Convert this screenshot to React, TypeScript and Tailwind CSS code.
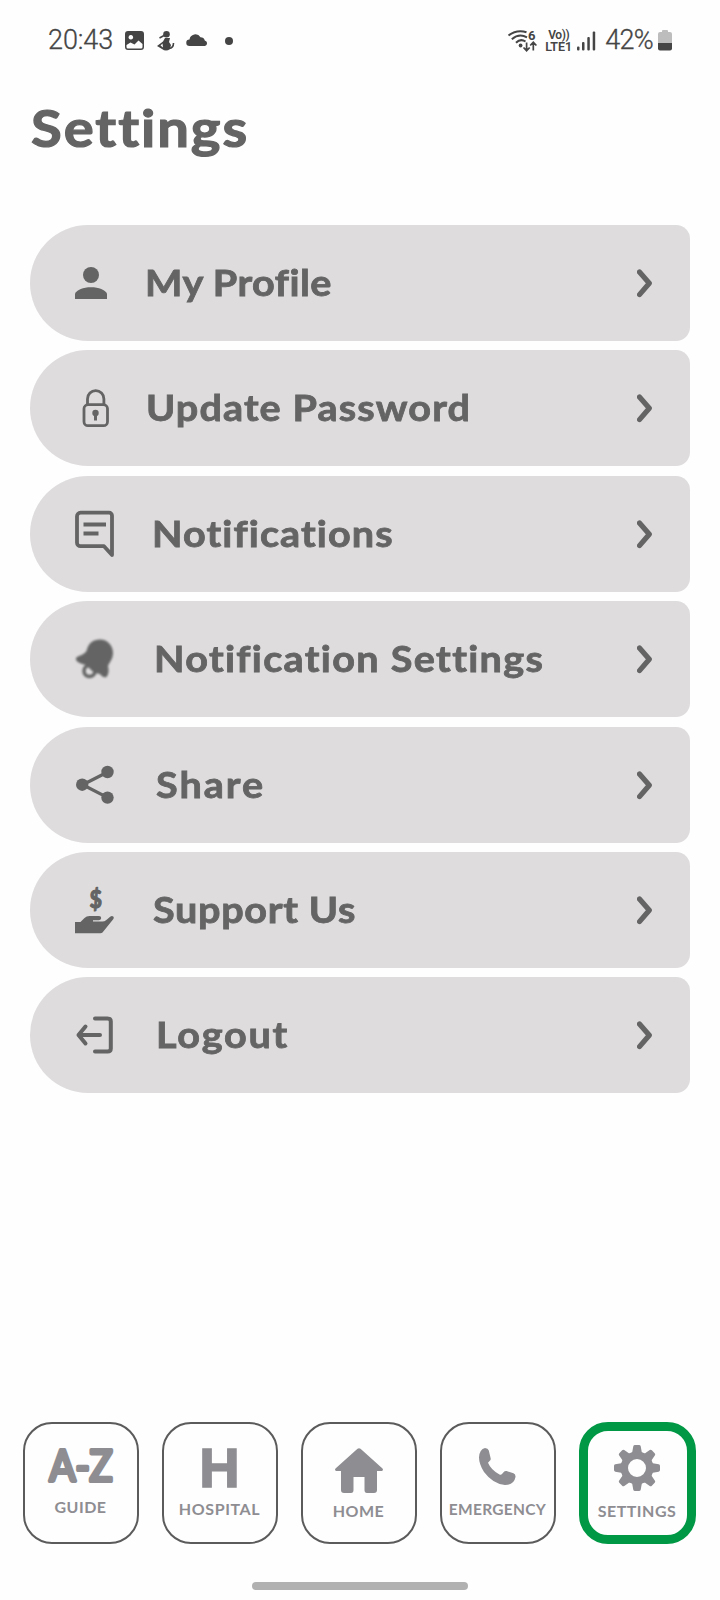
import type { ReactNode } from "react";

const ProfileIcon = () => (
  <svg className="w-10 h-12" viewBox="0 0 40 48" fill="currentColor">
    <circle cx="16" cy="16" r="8" />
    <path d="M0 40V34.500C2 31 8 28.300 16 28.300s14 2.700 16 6.200V40z" />
  </svg>
);

const LockIcon = () => (
  <svg className="w-10 h-12" viewBox="0 0 40 48" fill="none" stroke="currentColor" strokeWidth="2.800">
    <rect x="9" y="20.700" width="23.500" height="21" rx="4" />
    <path d="M12.500 20.500V14.900a8.200 8.200 0 0 1 16.400 0v5.600" />
    <circle cx="20.500" cy="29" r="3.200" fill="currentColor" stroke="none" />
    <path d="M20.500 29v7.500" strokeWidth="3" />
  </svg>
);

const MessageIcon = () => (
  <svg className="w-10 h-12" viewBox="0 0 40 48" fill="none" stroke="currentColor" strokeWidth="3.800" strokeLinejoin="round">
    <path d="M5.500 2.700H34a3 3 0 0 1 3 3V45l-8-8.800H5.500a3.500 3.500 0 0 1-3.500-3.500V6.200a3.500 3.500 0 0 1 3.500-3.500z" />
    <path d="M8.500 14.500H31M8.500 23.500h15" strokeWidth="4" />
  </svg>
);

const BellIcon = () => (
  <svg className="w-10 h-12 blur-[0.8px]" viewBox="0 0 40 48" fill="currentColor">
    <path d="M1 23c3-3 7-2 10.500-7C13.500 8 18 4.500 25 4.500c7.500 0 13 6 13 13.500 0 6-3.500 9-5 13 1 4 1 8-1.500 11-3 1-5-1-6.500-3-8-1-9-5-14-9C7 29 3 28 1 25z" />
    <circle cx="14.500" cy="36" r="5.500" fill="none" stroke="currentColor" strokeWidth="3.500" />
  </svg>
);

const ShareIcon = () => (
  <svg className="w-10 h-12" viewBox="0 0 40 48" fill="currentColor">
    <path d="M32.700 11L7.700 23.700l25 12.900" fill="none" stroke="currentColor" strokeWidth="3.300" />
    <circle cx="32.500" cy="11" r="6.200" />
    <circle cx="7.200" cy="23.700" r="6.200" />
    <circle cx="32.500" cy="36.600" r="6.200" />
  </svg>
);

const SupportIcon = () => (
  <svg className="w-10 h-12 overflow-visible" viewBox="0 0 40 48" fill="currentColor">
    <text x="20.800" y="21.500" textAnchor="middle" textLength="12.500" lengthAdjust="spacingAndGlyphs" className="font-[Lato] font-bold text-[25px]" stroke="currentColor" strokeWidth="1.200" strokeLinejoin="round">$</text>
    <path d="M0 36h5.500l4-4q2-2 5-2H24q2.200 0 2.200 2T24 34.200h-6v1.300h9.500q2 0 3.500-1.300l4.500-3.700q1.500-1 3 .2.800 1.200-.3 2.600L27.500 46.500q-.8.800-2 .8H0z" />
  </svg>
);

const LogoutIcon = () => (
  <svg className="w-10 h-12" viewBox="0 0 40 48" fill="none" stroke="currentColor" strokeWidth="4" strokeLinecap="round" strokeLinejoin="round">
    <path d="M20 7.500h12.500q3.300 0 3.300 3v27q0 3-3.300 3H20" />
    <path d="M25 24H3.500M10.500 15.500L3.500 24l7 8.500" />
  </svg>
);

const Chevron = () => (
  <svg className="w-4 h-8" viewBox="0 0 16 32" fill="none" stroke="currentColor" strokeWidth="5.200" strokeLinecap="round" strokeLinejoin="round">
    <path d="M2.500 5L12.300 16.300 2.500 27.600" />
  </svg>
);

const GearIcon = () => (
  <svg className="w-[46px] h-[46px] mb-[12px]" viewBox="0 0 46 46" fill="currentColor">
    <circle cx="23" cy="23" r="12.700" fill="none" stroke="currentColor" strokeWidth="7.400" />
    {[0, 45, 90, 135, 180, 225, 270, 315].map((angle) => (
      <path key={angle} d="M16 9.500L18.200 7.200 19.300 1.300Q19.600 0 21 0h4q1.400 0 1.700 1.300L27.800 7.200 30 9.500z" transform={`rotate(${angle} 23 23)`} />
    ))}
  </svg>
);

const items: { icon: ReactNode; label: string; className: string }[] = [
  { icon: <ProfileIcon />, label: "My Profile", className: "ml-[30px] tracking-[0.4px]" },
  { icon: <LockIcon />, label: "Update Password", className: "ml-[31px] tracking-[1px]" },
  { icon: <MessageIcon />, label: "Notifications", className: "ml-[37px] tracking-[1px]" },
  { icon: <BellIcon />, label: "Notification Settings", className: "ml-[39px] tracking-[1.2px]" },
  { icon: <ShareIcon />, label: "Share", className: "ml-[40.5px] tracking-[1.8px]" },
  { icon: <SupportIcon />, label: "Support Us", className: "ml-[37.5px] tracking-[0.6px]" },
  { icon: <LogoutIcon />, label: "Logout", className: "ml-[40.5px] tracking-[1.6px]" },
];

function StatusBar() {
  return (
    <div className="h-20 pl-[48px] pr-[48px] pt-px flex items-center text-[#454545] font-[Roboto,sans-serif]">
      <span className="w-[77px] text-[27px] leading-none font-light tracking-[-0.1px] [-webkit-text-stroke:0.3px_#454545]">20:43</span>
      <svg className="w-5 h-5" viewBox="0 0 20 20" fill="currentColor">
        <path fillRule="evenodd" d="M3 0h13q3 0 3 3v13q0 3-3 3H3q-3 0-3-3V3q0-3 3-3zm2.800 4a2.300 2.300 0 1 0 .1 0zM1.500 14v2q0 1.500 1.500 1.500h13q1.500 0 1.500-1.500v-3l-4-3.500-4 4-4-2z" />
      </svg>
      <svg className="w-[18px] h-5 ml-3" viewBox="0 0 18 20" fill="currentColor">
        <circle cx="9.500" cy="3.300" r="3.300" />
        <path fillRule="evenodd" d="M8 7h5l-1 4 2 3-1 4q-4 3-8 0l-5-3 6-4.500zM5.500 12.500l-2 2 2.500 2z" />
        <path d="M2.500 7l4.500-2.500M16.500 12q0 5-4.500 5.500" fill="none" stroke="currentColor" strokeWidth="1.600" />
      </svg>
      <svg className="w-[22px] h-3 ml-[11px] mt-[-1px]" viewBox="0 0 22 12" fill="currentColor">
        <path d="M3.500 12a3.200 3.200 0 0 1 0-6.500A6 6 0 0 1 14.500 3.200a4.500 4.500 0 0 1 4.300 3.200A2.900 2.900 0 0 1 19 12z" />
      </svg>
      <span className="w-2 h-2 ml-[17px] rounded-full bg-[#454545]" />
      <div className="flex-1" />
      <svg className="w-[30px] h-[22px] overflow-visible" viewBox="0 0 30 22" fill="none" stroke="currentColor" strokeWidth="2">
        <path d="M.5 5.500Q9-1 18.500 2.200M3.800 9.200Q11 3 19 7.300M8 12.700q4.500-4.500 9.500-1.200" />
        <circle cx="12.600" cy="15.500" r="1.900" fill="currentColor" stroke="none" />
        <path d="M18.600 12.500v8M15.500 17.500l3.100 3.200 3.100-3.200M25.300 20.500v-8M22.200 15.500l3.100-3.200 3.100 3.200" strokeWidth="1.700" />
        <text x="20" y="9.500" fill="currentColor" stroke="none" className="text-[13px] font-bold">6</text>
      </svg>
      <div className="w-[30px] ml-[7px] text-[12px] leading-[11px] font-semibold">
        <div className="pl-[3px] tracking-[-0.4px]">Vo))</div>
        <div className="text-[12.5px] tracking-[-0.1px]">LTE1</div>
      </div>
      <svg className="w-5 h-5 ml-[2px]" viewBox="0 0 20 20" fill="currentColor">
        <rect x="0" y="15.500" width="2.500" height="4" rx="1" />
        <rect x="5" y="11" width="2.500" height="8.500" rx="1" />
        <rect x="10.300" y="6" width="2.500" height="13.500" rx="1" />
        <rect x="15.700" y="0.500" width="2.500" height="19" rx="1" />
      </svg>
      <span className="ml-[8px] text-[27px] leading-none font-light tracking-[-0.7px] [-webkit-text-stroke:0.3px_#454545]">42%</span>
      <svg className="w-[14px] h-[21px] ml-[5px]" viewBox="0 0 14 21">
        <path d="M4 2V1q0-1 1-1h4q1 0 1 1v1h2q2 0 2 2v9H0V4q0-2 2-2z" fill="#bdbdbd" />
        <path d="M0 13h14v5.500q0 2-2 2H2q-2 0-2-2z" fill="#454545" />
      </svg>
    </div>
  );
}

const navBox = "w-[116px] h-[122px] rounded-[29px] flex flex-col items-center leading-none font-bold";
const navPlain = "border-2 border-[#5b5b5b]";

function BottomNav() {
  return (
    <nav className="pl-[22.5px] flex gap-[23px] text-[#8e8d92]">
      <div className={`${navBox} ${navPlain} pt-[23px]`}>
        <svg className="w-[68px] h-[38px] mb-[14px] overflow-visible" viewBox="0 0 68 38" fill="currentColor" stroke="currentColor" strokeWidth="4" strokeLinejoin="round">
          <text x="2.500" y="34" textLength="63" lengthAdjust="spacingAndGlyphs" fontFamily="Lato" fontWeight="400" fontSize="42">A-Z</text>
        </svg>
        <span className="text-[16px] tracking-[0.5px]">GUIDE</span>
      </div>
      <div className={`${navBox} ${navPlain} pt-[16px]`}>
        <span className="h-[61px] font-['Liberation_Sans'] text-[56px] leading-none font-bold [-webkit-text-stroke:1.6px_#8e8d92]">H</span>
        <span className="text-[16px] tracking-[0.6px]">HOSPITAL</span>
      </div>
      <div className={`${navBox} ${navPlain} pt-[24px]`}>
        <svg className="w-12 h-[45px] mb-[10px]" viewBox="0 0 48 45" fill="currentColor">
          <path d="M22.500.8q1.500-1.200 3 0L47.500 20.500q1.300 2-.8 2.500H42v19q0 3-3 3h-7q-2.500 0-2.500-3V29h-11v13q0 3-2.500 3H9q-3 0-3-3V23H1.300q-2.100-.5-.8-2.500z" />
        </svg>
        <span className="text-[16px] tracking-[0.5px]">HOME</span>
      </div>
      <div className={`${navBox} ${navPlain} pt-[24px]`}>
        <svg className="w-[37px] h-[38px] mb-[16px]" viewBox="0 0 37 38" fill="currentColor">
          <path d="M6 0Q9 0 9.800 2.500L11.700 10.500Q11.900 12 10.800 12.800L9 14.800Q12 22 20.500 26.500 22 27.300 23 26L25.200 23.600Q26.200 22.600 27.600 23L34.500 25.300Q36.800 26.300 36.500 29 35 37 26 37 14 36 5 24 0 16 0 9.500.5 1 6 0z" />
        </svg>
        <span className="text-[15.5px] tracking-[0.3px]">EMERGENCY</span>
      </div>
      <div className="w-[117px] h-[122px] rounded-[29px] flex flex-col items-center leading-none font-bold border-[9px] border-[#009845] pt-[14px]">
        <GearIcon />
        <span className="text-[16px] tracking-[0.5px]">SETTINGS</span>
      </div>
    </nav>
  );
}

export default function App() {
  return (
    <div className="w-[720px] h-[1600px] bg-[#fefefe] flex flex-col font-[Lato,sans-serif] overflow-hidden">
      <StatusBar />
      <header className="h-[145px] pt-[17px] pl-[31px]">
        <h1 className="w-fit origin-left scale-x-[1.08] text-[52px] leading-[60px] font-bold text-[#646464] tracking-[1.8px] [-webkit-text-stroke:1.2px_#646464]">Settings</h1>
      </header>
      <main className="h-[1197px] px-[30px] flex flex-col gap-[9.4px] text-[#646464]">
        {items.map((item) => (
          <button
            key={item.label}
            className="h-[116px] shrink-0 pl-[45px] pr-[37px] flex items-center rounded-l-[58px] rounded-r-[14px] bg-[#dedcdd]"
          >
            {item.icon}
            <span className={`pb-0.5 origin-left scale-x-[1.1] whitespace-nowrap text-[36px] leading-[48px] font-bold [-webkit-text-stroke:0.8px_#646464] ${item.className}`}>
              {item.label}
            </span>
            <span className="ml-auto">
              <Chevron />
            </span>
          </button>
        ))}
      </main>
      <BottomNav />
      <div className="w-[216px] h-[8px] mt-[38px] mx-auto rounded-full bg-[#b1b1b1]" />
    </div>
  );
}
